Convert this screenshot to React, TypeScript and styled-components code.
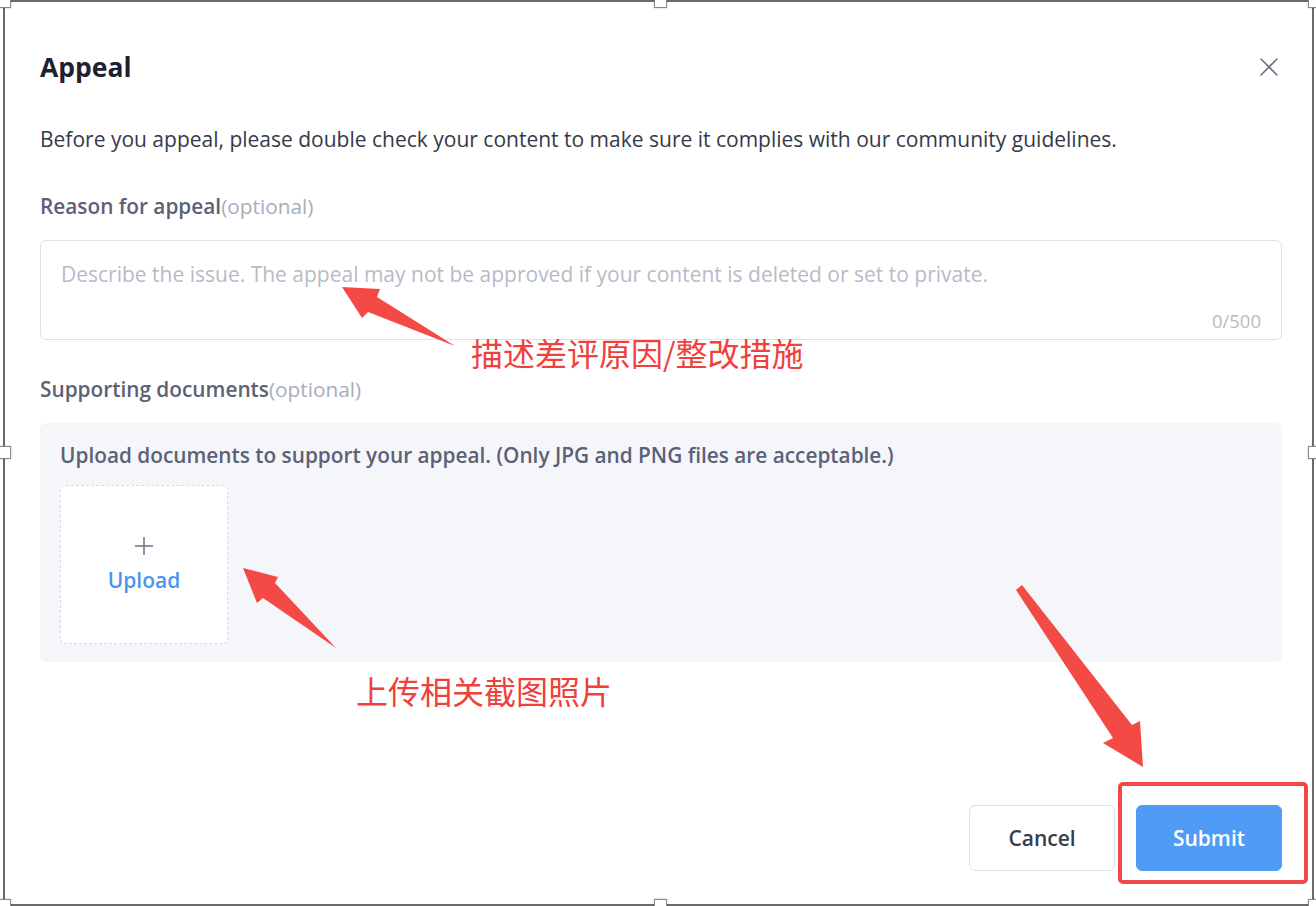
import React from "react";
import styled, { createGlobalStyle } from "styled-components";

const FONT = `"Open Sans", Lato, "Noto Sans", sans-serif`;

const Global = createGlobalStyle`
  html, body { margin: 0; padding: 0; background: #ffffff; }
  body { font-family: ${FONT}; overflow: hidden; }
  * { box-sizing: border-box; }
`;

const Page = styled.div`
  position: relative;
  width: 1316px;
  height: 906px;
  overflow: hidden;
`;

const Frame = styled.div`
  margin-left: 3px;
  width: 1311px;
  height: 906px;
  border: 2px solid #6a6a6a;
  background: #fff;
  padding: 49px 0 0 35px;
`;

const Dialog = styled.div`
  width: 1242px;
  display: flex;
  flex-direction: column;
`;

const Header = styled.div`
  display: flex;
  align-items: center;
  justify-content: space-between;
  height: 32px;
`;

const Title = styled.h1`
  margin: 0;
  font-size: 26.5px;
  line-height: 32px;
  font-weight: 700;
  color: #1e2130;
`;

const CloseButton = styled.button`
  border: none;
  background: none;
  padding: 0;
  margin-right: 4px;
  width: 18px;
  height: 18px;
  display: flex;
  cursor: pointer;
`;

const Description = styled.p`
  margin: 44px 0 0;
  font-size: 21px;
  line-height: 24px;
  color: #353a49;
`;

const Label = styled.div<{ $top: number }>`
  margin-top: ${(p) => p.$top}px;
  font-size: 20.8px;
  line-height: 24px;
  font-weight: 600;
  color: #5b6176;
`;

const Optional = styled.span`
  font-weight: 400;
  color: #a9adbb;
`;

const TextBox = styled.div`
  margin-top: 22px;
  height: 100px;
  border: 1px solid #dde1ec;
  border-radius: 6px;
  padding: 21px 20px 8px 20px;
  display: flex;
  flex-direction: column;
  justify-content: space-between;
`;

const Placeholder = styled.div`
  font-size: 21px;
  line-height: 24px;
  color: #b7bbc8;
`;

const Counter = styled.div`
  align-self: flex-end;
  font-size: 18.5px;
  line-height: 20px;
  color: #b7bbc8;
`;

const Panel = styled.div`
  margin-top: 22px;
  background: #f5f6fa;
  border-radius: 6px;
  padding: 20px 20px 18px;
  display: flex;
  flex-direction: column;
  gap: 18px;
`;

const PanelText = styled.div`
  font-size: 20.8px;
  line-height: 24px;
  font-weight: 600;
  color: #5b6176;
`;

const UploadBox = styled.div`
  width: 168px;
  height: 159px;
  background: #fff;
  border: 1.5px dashed #d6dae4;
  border-radius: 6px;
  display: flex;
  flex-direction: column;
  align-items: center;
  justify-content: center;
  gap: 13px;
`;

const UploadText = styled.div`
  font-size: 21px;
  line-height: 24px;
  font-weight: 600;
  color: #4b95ef;
`;

const Footer = styled.div`
  margin-top: 143px;
  display: flex;
  justify-content: flex-end;
  gap: 21px;
`;

const Button = styled.button<{ $primary?: boolean }>`
  width: 146px;
  height: 66px;
  border-radius: 6px;
  font-family: ${FONT};
  font-size: 21px;
  font-weight: 600;
  cursor: pointer;
  border: 1px solid ${(p) => (p.$primary ? "#4f9bf6" : "#dde1ec")};
  background: ${(p) => (p.$primary ? "#4f9bf6" : "#ffffff")};
  color: ${(p) => (p.$primary ? "#ffffff" : "#373b4a")};
`;

const Handle = styled.div<{ $x: number; $y: number }>`
  position: absolute;
  left: ${(p) => p.$x - 6}px;
  top: ${(p) => p.$y - 6}px;
  width: 13px;
  height: 13px;
  background: #fff;
  border: 1px solid #8a8a8a;
  box-shadow: 0 0 2px rgba(0, 0, 0, 0.25);
`;

const Overlay = styled.svg`
  position: absolute;
  left: 0;
  top: 0;
  pointer-events: none;
`;

const Note = styled.div<{ $x: number; $y: number }>`
  position: absolute;
  left: ${(p) => p.$x}px;
  top: ${(p) => p.$y}px;
  font-family: "Noto Sans CJK SC", sans-serif;
  font-size: 32px;
  line-height: 34px;
  color: #f0403c;
  white-space: nowrap;
`;

const Highlight = styled.div`
  position: absolute;
  left: 1118px;
  top: 782px;
  width: 190px;
  height: 102px;
  border: 4px solid #f04848;
  border-radius: 5px;
`;

const RED = "#f44a46";

export default function App() {
  return (
    <>
      <Global />
      <Page>
        <Frame>
          <Dialog>
            <Header>
              <Title>Appeal</Title>
              <CloseButton aria-label="close">
                <svg width="18" height="18" viewBox="0 0 18 18">
                  <path d="M1 1 L17 17 M17 1 L1 17" stroke="#6b7085" strokeWidth="1.6" strokeLinecap="round" />
                </svg>
              </CloseButton>
            </Header>
            <Description>
              Before you appeal, please double check your content to make sure it complies with our community guidelines.
            </Description>
            <Label $top={43}>
              Reason for appeal<Optional>(optional)</Optional>
            </Label>
            <TextBox>
              <Placeholder>
                Describe the issue. The appeal may not be approved if your content is deleted or set to private.
              </Placeholder>
              <Counter>0/500</Counter>
            </TextBox>
            <Label $top={37}>
              Supporting documents<Optional>(optional)</Optional>
            </Label>
            <Panel>
              <PanelText>
                Upload documents to support your appeal. (Only JPG and PNG files are acceptable.)
              </PanelText>
              <UploadBox>
                <svg width="18" height="18" viewBox="0 0 18 18">
                  <path d="M9 0 V18 M0 9 H18" stroke="#6b7082" strokeWidth="1.5" />
                </svg>
                <UploadText>Upload</UploadText>
              </UploadBox>
            </Panel>
            <Footer>
              <Button>Cancel</Button>
              <Button $primary>Submit</Button>
            </Footer>
          </Dialog>
        </Frame>

        <Overlay width="1316" height="906" viewBox="0 0 1316 906">
          <polygon points="342,287 380,289 377,297 455,346 368,312 362,318" fill={RED} />
          <polygon points="243,568 278,577 275,583 336,648 263,598 257,603" fill={RED} />
          <polygon points="1016,590 1022,585 1132,725 1140,721 1143,767 1103,743 1113,738" fill={RED} />
        </Overlay>
        <Note $x={471} $y={335}>描述差评原因/整改措施</Note>
        <Note $x={356} $y={673}>上传相关截图照片</Note>
        <Highlight />

        <Handle $x={4} $y={1} />
        <Handle $x={660} $y={1} />
        <Handle $x={1314} $y={1} />
        <Handle $x={4} $y={452} />
        <Handle $x={1314} $y={452} />
        <Handle $x={4} $y={905} />
        <Handle $x={660} $y={905} />
        <Handle $x={1314} $y={905} />
      </Page>
    </>
  );
}
